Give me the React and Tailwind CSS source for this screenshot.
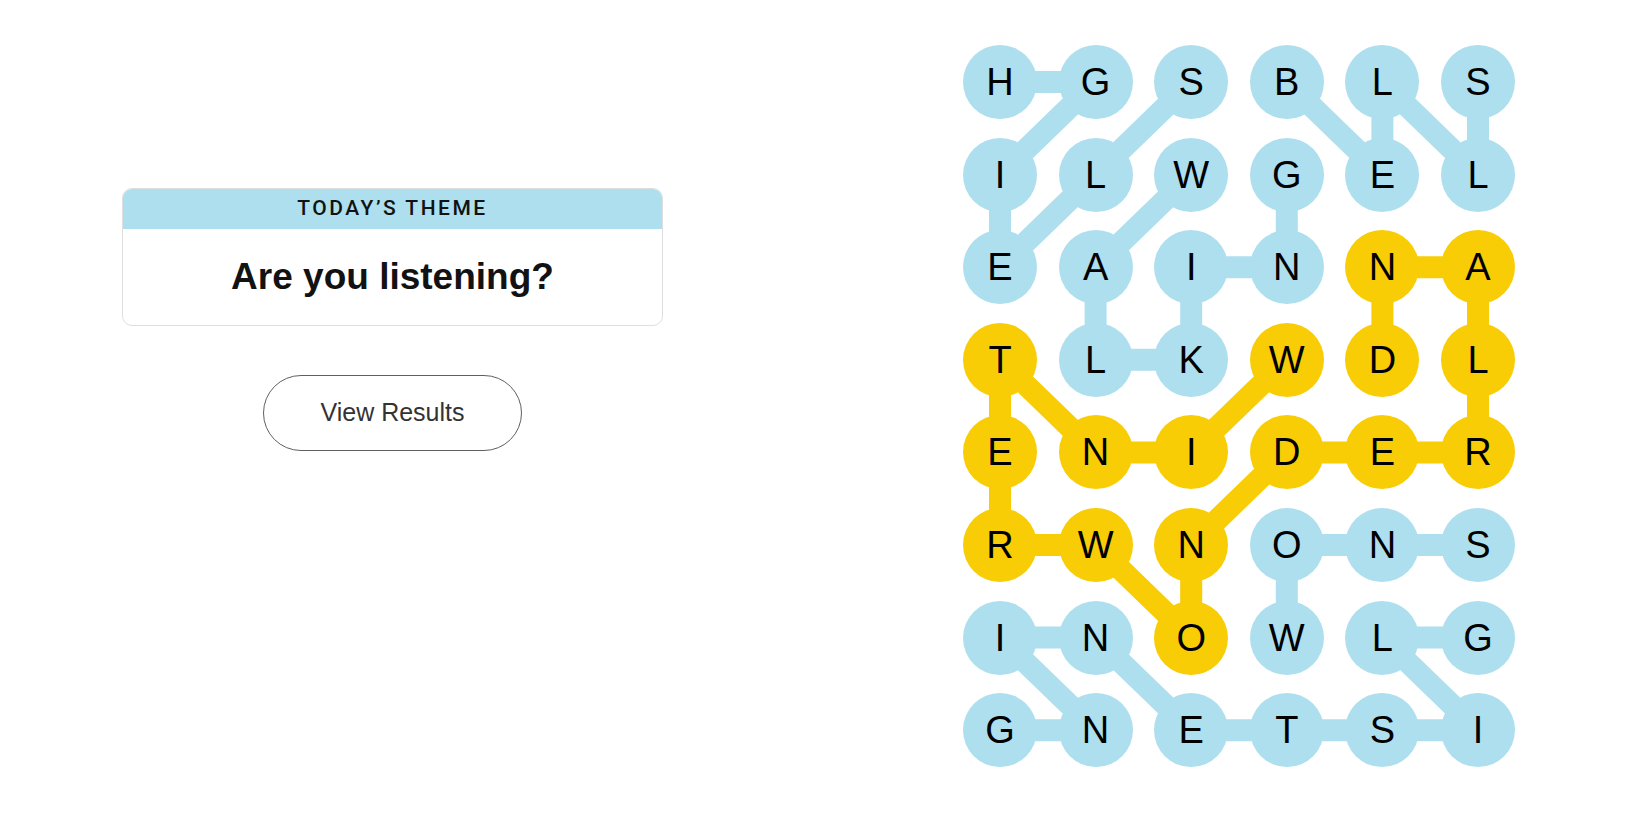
import React from 'react'

const ROWS = ['HGSBLS', 'ILWGEL', 'EAINNA', 'TLKWDL', 'ENIDER', 'RWNONS', 'INOWLG', 'GNETSI']

const GOLD = new Set(['2-4', '2-5', '3-0', '3-3', '3-4', '3-5', '4-0', '4-1', '4-2', '4-3', '4-4', '4-5', '5-0', '5-1', '5-2', '6-2'])

// found words, cell by cell as [row, col]
const BLUE_PATHS = [
  [[0, 2], [1, 1], [2, 0], [1, 0], [0, 1], [0, 0]],
  [[1, 2], [2, 1], [3, 1], [3, 2], [2, 2], [2, 3], [1, 3]],
  [[0, 3], [1, 4], [0, 4], [1, 5], [0, 5]],
  [[5, 5], [5, 4], [5, 3], [6, 3]],
  [[6, 5], [6, 4], [7, 5], [7, 4], [7, 3], [7, 2], [6, 1], [6, 0], [7, 1], [7, 0]],
]

const GOLD_PATH = [[3, 3], [4, 2], [4, 1], [3, 0], [4, 0], [5, 0], [5, 1], [6, 2], [5, 2], [4, 3], [4, 4], [4, 5], [3, 5], [2, 5], [2, 4], [3, 4]]

const CELL = 74
const STEP_X = 95.6
const STEP_Y = 92.6

const toPoints = (path) =>
  path.map(([r, c]) => `${CELL / 2 + c * STEP_X},${CELL / 2 + r * STEP_Y}`).join(' ')

function Board() {
  return (
    <div className="relative">
      <svg className="absolute inset-0 w-full h-full" fill="none" strokeWidth="22" strokeLinejoin="round">
        {BLUE_PATHS.map((p, i) => (
          <polyline key={i} points={toPoints(p)} stroke="#aedfee" />
        ))}
        <polyline points={toPoints(GOLD_PATH)} stroke="#f8cd05" />
      </svg>
      <div className="relative grid grid-cols-[repeat(6,74px)] gap-x-[21.6px] gap-y-[18.6px]">
        {ROWS.map((row, r) =>
          row.split('').map((ch, c) => (
            <div
              key={`${r}-${c}`}
              className={`w-[74px] h-[74px] rounded-full flex items-center justify-center text-[38px] leading-none text-black ${
                GOLD.has(`${r}-${c}`) ? 'bg-[#f8cd05]' : 'bg-[#aedfee]'
              }`}
            >
              {ch}
            </div>
          ))
        )}
      </div>
    </div>
  )
}

export default function App() {
  return (
    <div className="w-[1650px] h-[825px] bg-white flex font-['Liberation_Sans',Arial,sans-serif] text-black">
      {/* Theme + results */}
      <div className="ml-[122px] mt-[188px] w-[541px] flex flex-col items-center">
        <div className="w-full rounded-[10px] border border-[#dedede] overflow-hidden">
          <div className="h-[40px] bg-[#aedfee] flex items-center justify-center font-['Roboto',sans-serif] text-[21px] font-medium tracking-[2.5px] text-[#121212]">
            TODAY’S THEME
          </div>
          <div className="h-[96px] flex items-center justify-center text-[37px] font-bold text-[#121212]">
            Are you listening?
          </div>
        </div>
        <button className="mt-[49px] w-[259px] h-[76px] rounded-full border border-[#5f5f5f] text-[25px] text-[#333]">
          View Results
        </button>
      </div>

      {/* Board */}
      <div className="ml-[300px] mt-[45px]">
        <Board />
      </div>
    </div>
  )
}
